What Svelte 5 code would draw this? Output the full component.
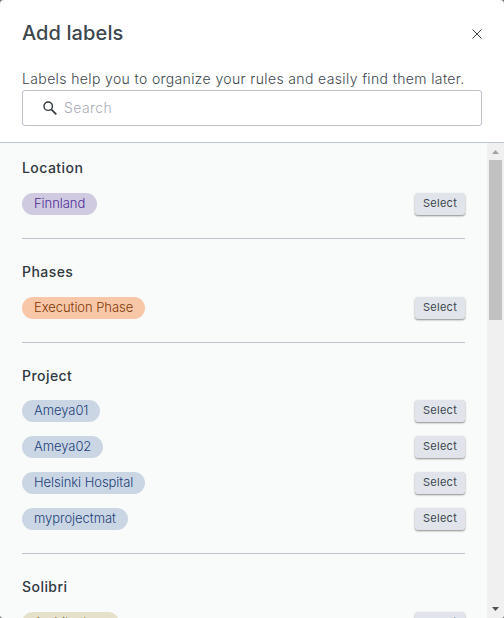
<script lang="ts">
  type Group = { title: string; tone: string; labels: string[] };

  let search: string = $state("");

  let groups: Group[] = [
    { title: "Location", tone: "purple", labels: ["Finnland"] },
    { title: "Phases", tone: "orange", labels: ["Execution Phase"] },
    { title: "Project", tone: "blue", labels: ["Ameya01", "Ameya02", "Helsinki Hospital", "myprojectmat"] },
    { title: "Solibri", tone: "sand", labels: ["Architecture"] },
  ];
</script>

<div class="backdrop">
  <div class="dialog">
    <header>
      <div class="title-row">
        <h2>Add labels</h2>
        <button class="close" aria-label="Close">
          <svg width="10" height="10" viewBox="0 0 10 10">
            <path d="M.5 .5l9 9M9.5 .5l-9 9" fill="none" stroke="#3c474d" stroke-width="1" />
          </svg>
        </button>
      </div>
      <p>Labels help you to organize your rules and easily find them later.</p>
      <div class="search">
        <svg width="15" height="15" viewBox="0 0 15 15">
          <circle cx="5.2" cy="5.2" r="4.2" fill="none" stroke="#30393f" stroke-width="1.4" />
          <path d="M8.3 8.3l5 5" stroke="#30393f" stroke-width="1.7" />
        </svg>
        <input type="text" placeholder="Search" bind:value={search} />
      </div>
    </header>

    <div class="body">
      <div class="list">
        {#each groups as group}
          <section>
            <h3>{group.title}</h3>
            {#each group.labels as label}
              <div class="row">
                <span class="chip {group.tone}">{label}</span>
                <button class="select">Select</button>
              </div>
            {/each}
          </section>
        {/each}
      </div>
      <div class="scrollbar">
        <svg class="up" width="7" height="4" viewBox="0 0 7 4"><path d="M0 4L3.5 0L7 4z" fill="#a3a3a3" /></svg>
        <div class="thumb"></div>
        <svg class="down" width="7" height="4" viewBox="0 0 7 4"><path d="M0 0L3.5 4L7 0z" fill="#505050" /></svg>
      </div>
    </div>
  </div>
</div>

<style>
  :global(body) {
    margin: 0;
    overflow: hidden;
  }

  .backdrop {
    background: #77797a;
  }

  .dialog {
    display: flex;
    flex-direction: column;
    height: 618px;
    overflow: hidden;
    border-radius: 4px;
    background: #fff;
    color: #3c474d;
    font-family: Inter, "Liberation Sans", sans-serif;
  }

  header {
    box-sizing: border-box;
    height: 143px;
    flex: none;
    padding: 20px 22px 0;
    border-bottom: 1px solid #bfc5ce;
  }

  .title-row {
    display: flex;
    align-items: center;
    justify-content: space-between;
    height: 27px;
  }

  h2 {
    margin: 0;
    font-size: 20px;
    font-weight: 500;
    line-height: 27px;
    letter-spacing: 0.1px;
  }

  .close {
    display: flex;
    padding: 0;
    border: none;
    background: none;
  }

  p {
    margin: 21px 0 1px;
    font-size: 14px;
    font-weight: 300;
    line-height: 21px;
    letter-spacing: 0.37px;
    white-space: nowrap;
    color: #3c474d;
  }

  .search {
    display: flex;
    align-items: center;
    box-sizing: border-box;
    height: 36px;
    padding-left: 20px;
    border: 1px solid #bfc2cc;
    border-radius: 3px;
  }

  input {
    flex: 1;
    margin-left: 6px;
    padding: 0;
    border: none;
    outline: none;
    background: none;
    font: 300 14px/20px Inter, "Liberation Sans", sans-serif;
    letter-spacing: 0.4px;
  }

  input::placeholder {
    color: #a9acb9;
  }

  .body {
    display: flex;
    flex: 1;
    min-height: 0;
    background: #f9fbfa;
  }

  .list {
    flex: 1;
    padding: 0 22px;
    overflow: hidden;
  }

  section {
    padding: 15.4px 0 9px;
    border-bottom: 1px solid #c1c4ca;
  }

  section + section {
    padding-top: 23.05px;
  }

  h3 {
    margin: 0 0 14.6px;
    font-size: 14px;
    font-weight: 500;
    line-height: 20px;
    letter-spacing: 0.45px;
    color: #30393f;
  }

  .row {
    display: flex;
    align-items: center;
    justify-content: space-between;
    height: 22px;
    margin-bottom: 14px;
  }

  .chip {
    padding: 0 12px 1px;
    border-radius: 11px;
    font-size: 13px;
    font-weight: 300;
    line-height: 21px;
    letter-spacing: -0.05px;
  }

  .purple {
    background: #cfcae0;
    color: #4f2c97;
  }

  .orange {
    background: #f8c7a8;
    color: #813706;
  }

  .blue {
    background: #cbd6e5;
    color: #1c4279;
  }

  .sand {
    background: #e5e0ca;
    color: #786a38;
  }

  .select {
    width: 50px;
    height: 22px;
    padding: 0 0 2px;
    border: none;
    border-radius: 3px;
    background: #e1e4ea;
    box-shadow: 0 1px 2px rgba(0, 0, 0, 0.45);
    font: 11px/20px Inter, "Liberation Sans", sans-serif;
    letter-spacing: 0.3px;
    color: #3c474d;
  }

  .scrollbar {
    display: flex;
    flex-direction: column;
    align-items: center;
    box-sizing: border-box;
    width: 17px;
    padding: 7px 0;
    background: #f0f0f0;
  }

  .thumb {
    width: 13px;
    height: 160px;
    margin-top: 6px;
    background: #c1c1c1;
  }

  .down {
    margin-top: auto;
  }
</style>
